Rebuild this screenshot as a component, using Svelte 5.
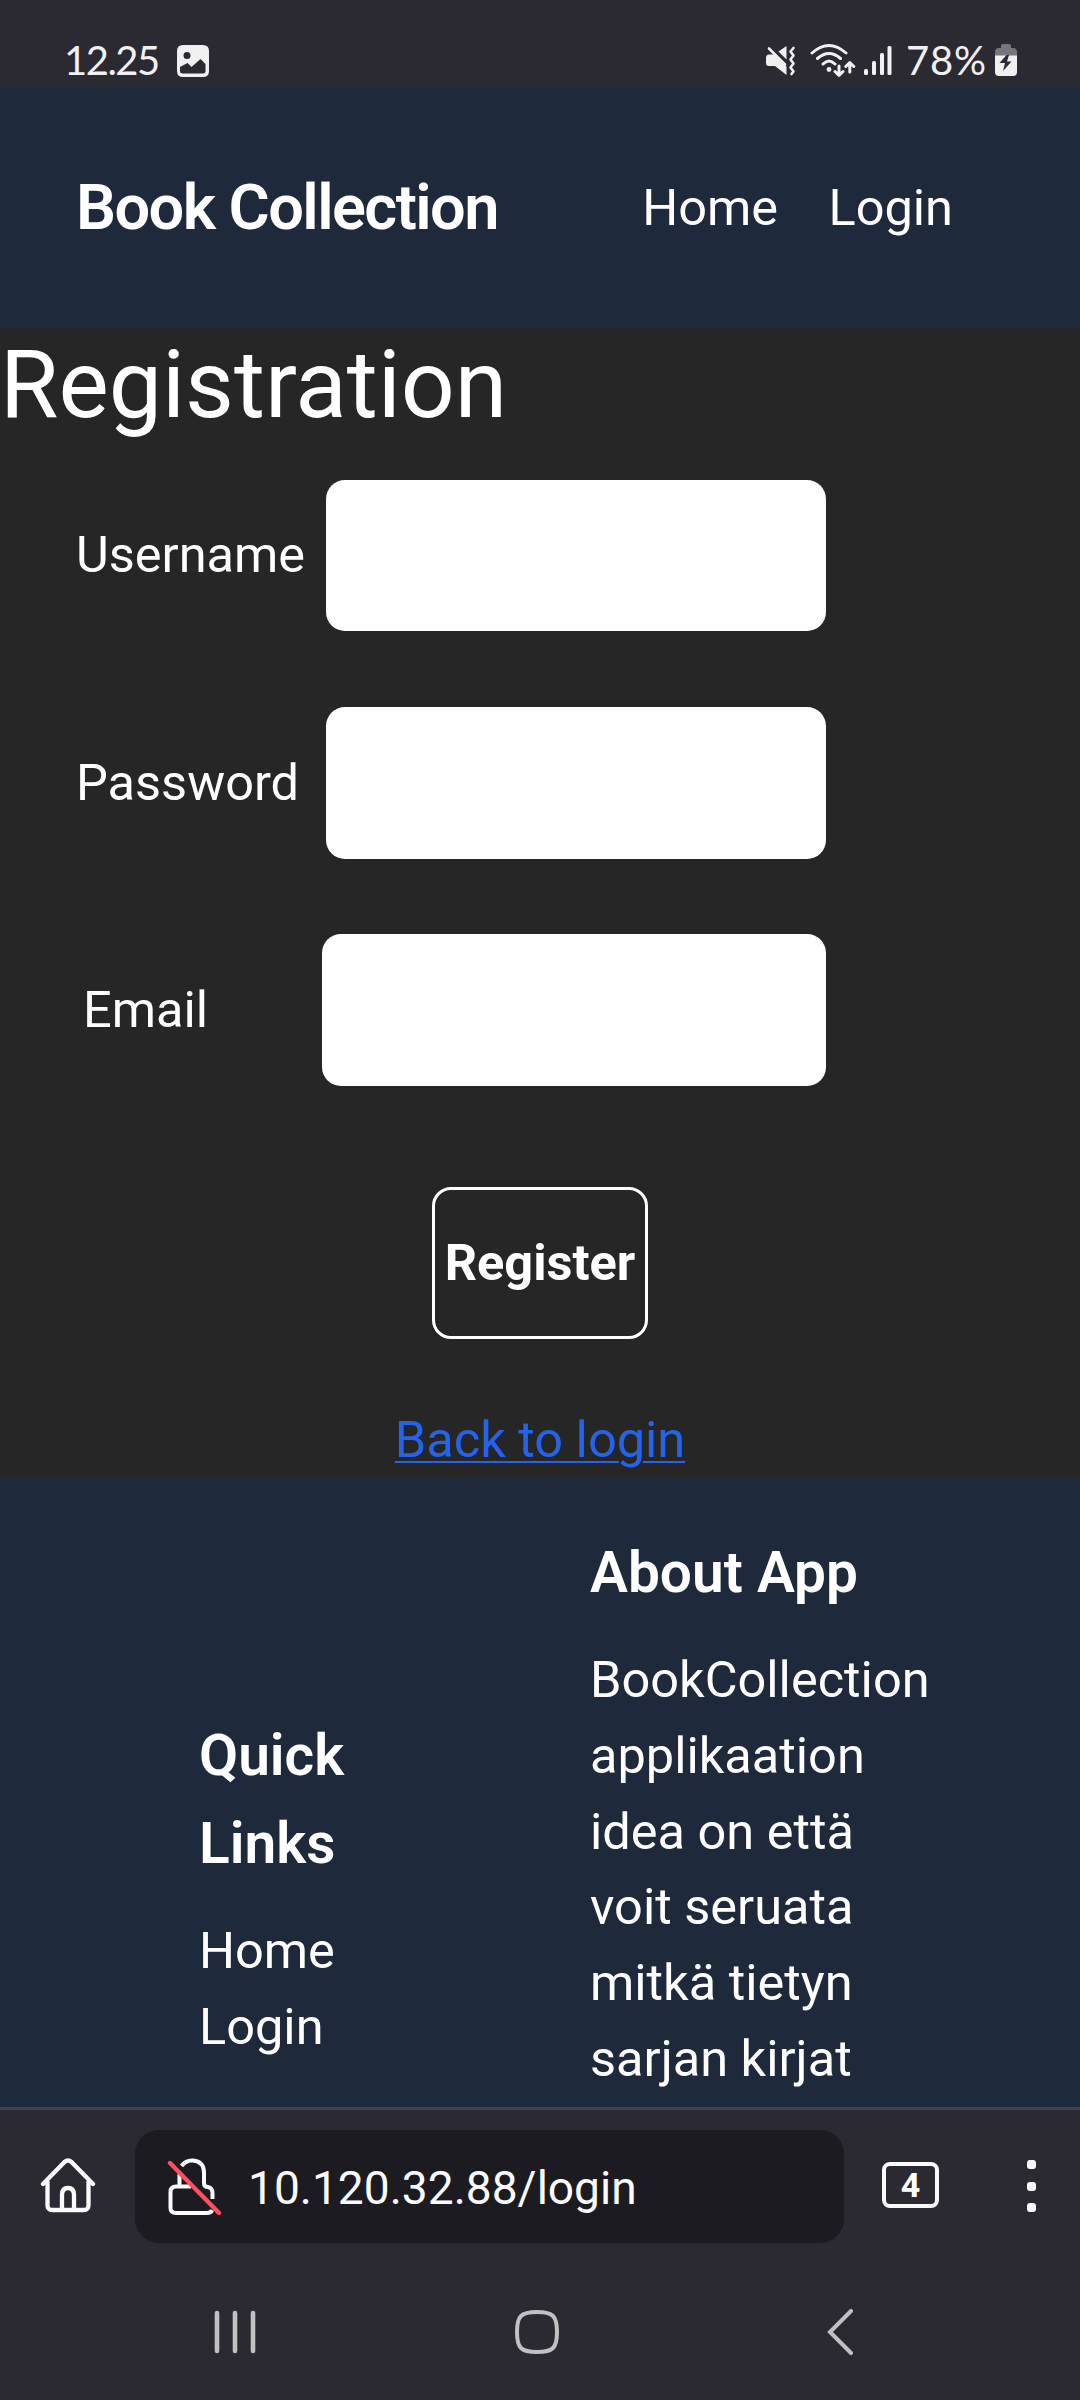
<script>
  const fields = [
    { id: 'username', label: 'Username', type: 'text' },
    { id: 'password', label: 'Password', type: 'password' },
    { id: 'email', label: 'Email', type: 'email' }
  ];
  const about = ['BookCollection', 'applikaation', 'idea on että', 'voit seruata', 'mitkä tietyn', 'sarjan kirjat'];
</script>

<div class="screen">
  <div class="status">
    <span class="clock">12.25</span>
    <svg class="photo" width="32" height="32" viewBox="0 0 32 32">
      <path fill="#f0f0f0" fill-rule="evenodd" d="M6 0H26Q32 0 32 6V26Q32 32 26 32H6Q0 32 0 26V6Q0 0 6 0ZM10 7A3.5 3.5 0 1 0 10 14A3.5 3.5 0 1 0 10 7ZM3 22V26Q3 28.5 5.500 28.500H26Q28.500 28.500 28.500 26V19L23.500 14L14.500 22L10.500 18Z" />
    </svg>
    <div class="indicators">
      <svg class="mute" width="30" height="30" viewBox="0 0 30 30">
        <path fill="#f0f0f0" d="M0 12Q0 8.500 3 8.500H8.500L20.500 20.500V29L9 20H3Q0 20 0 17ZM12.500 5.500L20.500 0V13.500Z" />
        <path fill="none" stroke="#f0f0f0" stroke-width="2.600" stroke-linecap="round" stroke-linejoin="round" d="M3 2.500L19 18.500M27.500 2L24.500 5.500L27.500 9.500L24.500 13.500L27.500 17.500L24.500 21.500L27.500 25.500L25.500 28" />
      </svg>
      <svg class="wifi" width="46" height="34" viewBox="0 0 46 34">
        <g fill="none" stroke="#f0f0f0" stroke-width="3" stroke-linecap="round" stroke-linejoin="round">
          <path d="M2 10Q19-5 36 10M7.500 15.500Q19 5.500 30.500 15.500M13 21Q19 15 25 21" />
          <path d="M29 23V32M25 28.500L29 32.300L33 28.500M39.800 29V20M35.800 23.500L39.800 19.500L43.800 23.500" />
        </g>
        <circle cx="19" cy="26.500" r="2.400" fill="#f0f0f0" />
      </svg>
      <svg class="signal" width="28" height="30" viewBox="0 0 28 30">
        <g fill="#f0f0f0">
          <rect x="0" y="23" width="4" height="6" rx="1.500" />
          <rect x="8" y="15" width="4" height="14" rx="1.500" />
          <rect x="16" y="7" width="4" height="22" rx="1.500" />
          <rect x="23.500" y="0" width="4" height="29" rx="1.500" />
        </g>
      </svg>
      <span class="percent">78%</span>
      <svg class="battery" width="22" height="32" viewBox="0 0 22 32">
        <path fill="#77767b" d="M0 12V8Q0 4 4 4H6V2Q6 0 8 0H14Q16 0 16 2V4H18Q22 4 22 8V12Z" />
        <path fill="#f0f0f0" d="M0 11.500H22V28Q22 32 18 32H4Q0 32 0 28Z" />
        <path fill="#2b2932" d="M11.500 11L4.500 19H10L8 27L16.500 17.500H12L14 11Z" />
      </svg>
    </div>
  </div>

  <header>
    <h2>Book Collection</h2>
    <nav>
      <a href="#home">Home</a>
      <a href="#login">Login</a>
    </nav>
  </header>

  <main>
    <h1>Registration</h1>
    <form>
      {#each fields as f}
        <div class="field {f.id}">
          <label for={f.id}>{f.label}</label>
          <input id={f.id} type={f.type} />
        </div>
      {/each}
      <button type="button">Register</button>
    </form>
    <a class="back" href="#login">Back to login</a>
  </main>

  <footer>
    <section class="links">
      <h3>Quick<br />Links</h3>
      <p>Home</p>
      <p>Login</p>
    </section>
    <section class="about">
      <h3>About App</h3>
      {#each about as line}
        <p>{line}</p>
      {/each}
    </section>
  </footer>

  <div class="toolbar">
    <svg class="home" width="56" height="56" viewBox="0 0 56 56">
      <g fill="none" stroke="#fbfbfe" stroke-width="4.300" stroke-linejoin="round">
        <path stroke-linecap="round" d="M3 27L24.500 5Q28 2 31.500 5L53 27" />
        <path d="M7.500 24V48Q7.500 53 12.500 53H43.500Q48.500 53 48.500 48V24M22 53V38Q22 31 28 31Q34 31 34 38V53" />
      </g>
    </svg>
    <div class="address">
      <svg class="lock" width="56" height="60" viewBox="0 0 56 60">
        <g fill="none" stroke="#fbfbfe" stroke-width="4">
          <path d="M14.500 9Q19 3 26 3.500Q37 4.500 37 16V26Q37 30 41 30Q45.500 31 45.500 36V42M12.500 17V29.500M24 29.500H9Q3.500 29.500 3.500 35V51Q3.500 56 9 56H40Q44 56 45 53" />
        </g>
        <path stroke="#ff4f5e" stroke-width="4.400" stroke-linecap="round" d="M3 6L52 56" />
      </svg>
      <span>10.120.32.88/login</span>
    </div>
    <div class="tabs">4</div>
    <div class="menu"><i></i><i></i><i></i></div>
  </div>

  <div class="system">
    <svg width="42" height="44" viewBox="0 0 42 44">
      <path stroke="#c1c0c3" stroke-width="4.600" stroke-linecap="round" d="M3 3V41M21 3V41M39 3V41" />
    </svg>
    <svg width="44" height="44" viewBox="0 0 44 44">
      <path fill="none" stroke="#c1c0c3" stroke-width="4" d="M22 2C38 2 42 6 42 22S38 42 22 42S2 38 2 22S6 2 22 2Z" />
    </svg>
    <svg width="28" height="46" viewBox="0 0 28 46">
      <path fill="none" stroke="#c1c0c3" stroke-width="4" stroke-linecap="round" d="M24 2L3 23L24 44" />
    </svg>
  </div>
</div>

<style>
  :global(body) { margin: 0; background: #2b2932; }
  .screen { width: 1080px; height: 2400px; display: flex; flex-direction: column; overflow: hidden; background: #2b2932; color: #fff; font: 50.5px/75.7px Roboto, sans-serif; }
  .screen * { box-sizing: border-box; }
  svg { display: block; flex: none; }
  h1, h2, h3, p { margin: 0; }
  a { color: inherit; text-decoration: none; }

  .status { height: 88px; flex: none; display: flex; align-items: flex-start; padding: 0 63px 0 64px; color: #f0f0f0; font: 40px/48px Lato, sans-serif; }
  .clock { width: 113px; margin-top: 36px; white-space: nowrap; letter-spacing: -1.5px; }
  .photo { margin-top: 45px; }
  .indicators { margin-left: auto; display: flex; align-items: flex-start; }
  .mute { margin-top: 46px; }
  .wifi { margin: 43px 0 0 14px; }
  .signal { margin: 46px 0 0 8px; }
  .percent { width: 81px; margin: 36px 0 0 14px; white-space: nowrap; letter-spacing: 0.8px; }
  .battery { margin: 44px 0 0 8px; }

  header { height: 240px; flex: none; display: flex; align-items: center; justify-content: space-between; padding: 0 127px 0 76px; background: #1e293b; }
  h2 { font-size: 63.1px; font-weight: 600; letter-spacing: -1.58px; }
  nav { display: flex; gap: 50.4px; }

  main { height: 1149px; flex: none; background: #262626; display: flex; flex-direction: column; }
  h1 { height: 113px; font-size: 94.8px; line-height: 113px; font-weight: 400; }
  form { margin-top: 39px; display: flex; flex-direction: column; }
  .field { display: flex; align-items: center; height: 151px; margin-bottom: 76px; padding-left: 76px; }
  .password { height: 152px; margin-bottom: 75px; }
  label { width: 250px; }
  .username label { padding-bottom: 1px; }
  input { width: 500px; height: 100%; padding: 0 20px; border: 0; border-radius: 19px; background: #fff; font: inherit; color: #262626; }
  .email { height: 152px; padding-left: 83px; margin-bottom: 75px; }
  .email label { width: 239px; }
  .email input { width: 504px; }
  button { align-self: center; width: 216px; height: 152px; margin-top: 26px; padding: 0; border: 3px solid #fff; border-radius: 19px; background: none; color: #fff; font: 700 50.5px/75.7px Roboto, sans-serif; }
  .back { align-self: center; margin-top: 63px; color: #2563eb; text-decoration: underline; text-decoration-thickness: 2px; text-underline-offset: 4px; }

  footer { height: 630px; flex: none; display: flex; align-items: flex-start; background: #1e293b; padding: 52px 0 0 199px; }
  h3 { font-size: 56.8px; line-height: 88.2px; font-weight: 600; margin-bottom: 25px; }
  .links { width: 391px; padding-top: 183px; }

  .toolbar { height: 172px; flex: none; border-top: 3px solid #42414d; display: flex; align-items: flex-start; }
  .home { margin: 47px 0 0 40px; }
  .address { width: 709px; height: 113px; margin: 20px 0 0 39px; padding-left: 32px; border-radius: 24px; background: #1c1b22; display: flex; align-items: center; gap: 25px; font-size: 46.1px; color: #fbfbfe; }
  .address span { padding-top: 4px; }
  .tabs { width: 57px; height: 46px; margin: 52px 0 0 38px; border: 4px solid #fbfbfe; border-radius: 8px; font-size: 34px; font-weight: 700; line-height: 39px; text-align: center; }
  .menu { margin: 50px 0 0 88px; display: flex; flex-direction: column; gap: 12.5px; }
  .menu i { width: 9px; height: 9px; border-radius: 3px; background: #fbfbfe; }

  .system { flex: 1; display: flex; align-items: flex-start; padding: 31px 0 0 214px; }
  .system svg:nth-child(2) { margin: 0 0 0 259px; }
  .system svg:nth-child(3) { margin: -1px 0 0 268px; }
</style>
